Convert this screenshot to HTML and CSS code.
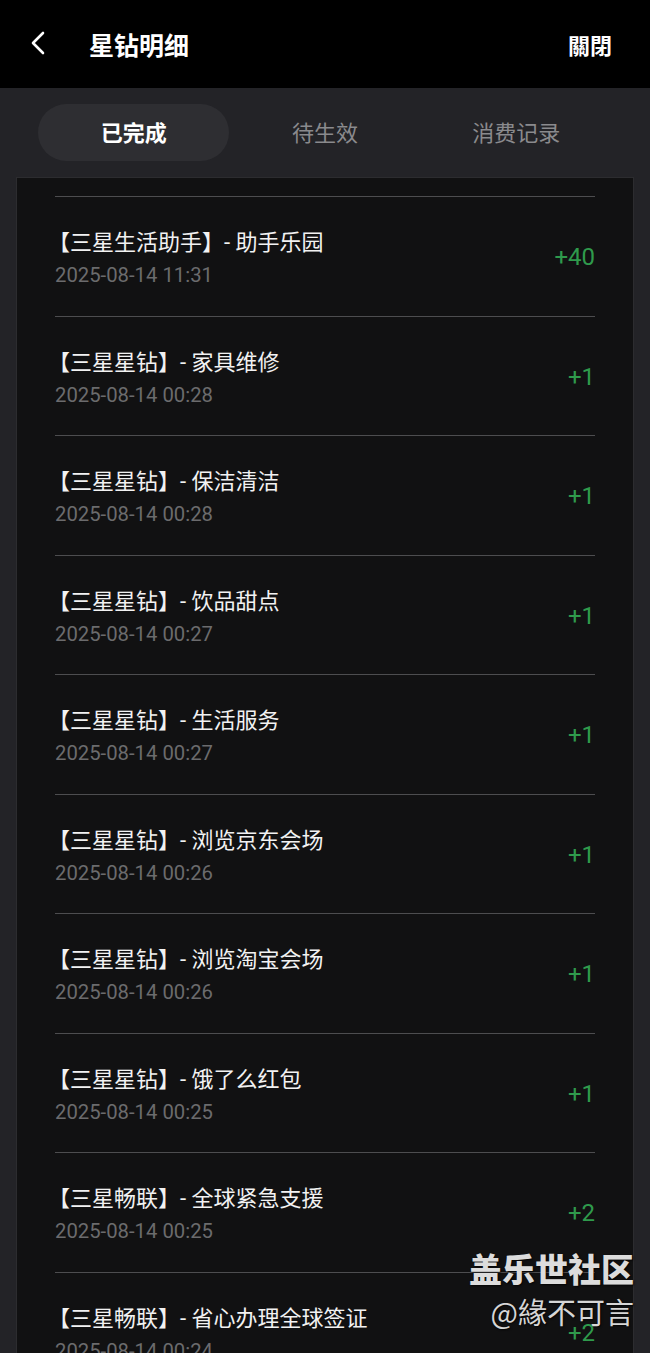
FILE: index.html
```html
<!DOCTYPE html>
<html lang="zh-CN">
<head>
    <meta charset="UTF-8">
    <meta name="viewport" content="width=device-width, initial-scale=1.0">
    <title>星钻明细</title>
    <link rel="stylesheet" href="styles.css">
</head>
<body>

<div class="page">
    <div class="top-bar">
        <div class="top-left">
            <svg class="back" width="16" height="24" viewBox="0 0 16 24">
                <path d="M13 2 L3 12 L13 22" fill="none" stroke="#fff" stroke-width="2.6" stroke-linecap="round" stroke-linejoin="round"/>
            </svg>
            <h1>星钻明细</h1>
        </div>
        <span class="close">關閉</span>
    </div>

    <div class="tabs">
        <div class="tab active">已完成</div>
        <div class="tab">待生效</div>
        <div class="tab">消费记录</div>
    </div>

    <div class="card">
        <div class="row">
            <div class="info">
                <p class="name">【三星生活助手】- 助手乐园</p>
                <p class="time">2025-08-14 11:31</p>
            </div>
            <span class="amount">+40</span>
        </div>
        <div class="row">
            <div class="info">
                <p class="name">【三星星钻】- 家具维修</p>
                <p class="time">2025-08-14 00:28</p>
            </div>
            <span class="amount">+1</span>
        </div>
        <div class="row">
            <div class="info">
                <p class="name">【三星星钻】- 保洁清洁</p>
                <p class="time">2025-08-14 00:28</p>
            </div>
            <span class="amount">+1</span>
        </div>
        <div class="row">
            <div class="info">
                <p class="name">【三星星钻】- 饮品甜点</p>
                <p class="time">2025-08-14 00:27</p>
            </div>
            <span class="amount">+1</span>
        </div>
        <div class="row">
            <div class="info">
                <p class="name">【三星星钻】- 生活服务</p>
                <p class="time">2025-08-14 00:27</p>
            </div>
            <span class="amount">+1</span>
        </div>
        <div class="row">
            <div class="info">
                <p class="name">【三星星钻】- 浏览京东会场</p>
                <p class="time">2025-08-14 00:26</p>
            </div>
            <span class="amount">+1</span>
        </div>
        <div class="row">
            <div class="info">
                <p class="name">【三星星钻】- 浏览淘宝会场</p>
                <p class="time">2025-08-14 00:26</p>
            </div>
            <span class="amount">+1</span>
        </div>
        <div class="row">
            <div class="info">
                <p class="name">【三星星钻】- 饿了么红包</p>
                <p class="time">2025-08-14 00:25</p>
            </div>
            <span class="amount">+1</span>
        </div>
        <div class="row">
            <div class="info">
                <p class="name">【三星畅联】- 全球紧急支援</p>
                <p class="time">2025-08-14 00:25</p>
            </div>
            <span class="amount">+2</span>
        </div>
        <div class="row">
            <div class="info">
                <p class="name">【三星畅联】- 省心办理全球签证</p>
                <p class="time">2025-08-14 00:24</p>
            </div>
            <span class="amount">+2</span>
        </div>
    </div>

    <!-- watermark over the list -->
    <div class="watermark">
        <div class="wm-title">盖乐世社区</div>
        <div class="wm-user">@緣不可言</div>
    </div>
</div>

</body>
</html>
```

FILE: styles.css
```css
body {
    margin: 0;
    background-color: #232327;
    font-family: Roboto, "Noto Sans CJK SC", sans-serif;
    color: #fff;
}
.page {
    position: relative;
    height: 1353px;
    overflow: hidden;
}
.top-bar {
    height: 88px;
    background: #000;
    display: flex;
    align-items: center;
    justify-content: space-between;
    padding: 0 38px 0 30px;
}
.top-left {
    display: flex;
    align-items: center;
}
.back {
    display: block;
    margin-top: -2px;
}
.top-bar h1 {
    margin: 0 0 0 43px;
    font-size: 25px;
    font-weight: 700;
    font-family: "Noto Sans CJK SC", sans-serif;
}
.close {
    font-family: "Noto Sans CJK TC", sans-serif;
    font-size: 22px;
    font-weight: 700;
}
.tabs {
    display: grid;
    grid-template-columns: 1fr 1fr 1fr;
    padding: 16px 38px;
}
.tab {
    height: 57px;
    line-height: 55px;
    text-align: center;
    font-family: "Noto Sans CJK SC", sans-serif;
    font-size: 22px;
    color: #8a8a8d;
    border-radius: 29px;
}
.tab.active {
    background: #2e2e32;
    color: #fff;
    font-weight: 700;
}
.card {
    margin: 0 16px;
    background: #111112;
    border: 1px solid #2c2c2f;
    border-bottom: none;
    padding: 18px 38px 0;
}
.row {
    height: 119.5px;
    box-sizing: border-box;
    border-top: 1px solid #4d4d4f;
    display: flex;
    align-items: center;
    justify-content: space-between;
}
.info {
    align-self: flex-start;
    padding-top: 31px;
}
.name {
    margin: 0 0 0 -7px;
    font-size: 22px;
    line-height: 30px;
    color: #f2f2f2;
}
.time {
    margin: 3px 0 0;
    font-size: 20.3px;
    line-height: 28px;
    color: #6b6b6d;
}
.amount {
    font-size: 24px;
    color: #2f9a4c;
    margin-top: 2px;
}
.watermark {
    position: absolute;
    right: 16px;
    top: 1245px;
    text-align: right;
    font-family: "Noto Sans CJK SC", sans-serif;
    text-shadow: 1px 1px 2px rgba(0, 0, 0, 0.8);
}
.wm-title {
    font-size: 33px;
    font-weight: 900;
    line-height: 46px;
    color: #dcdcdc;
}
.wm-user {
    font-family: "Noto Sans CJK TC", sans-serif;
    font-size: 29px;
    line-height: 40px;
    color: #d6d6d6;
}
```
